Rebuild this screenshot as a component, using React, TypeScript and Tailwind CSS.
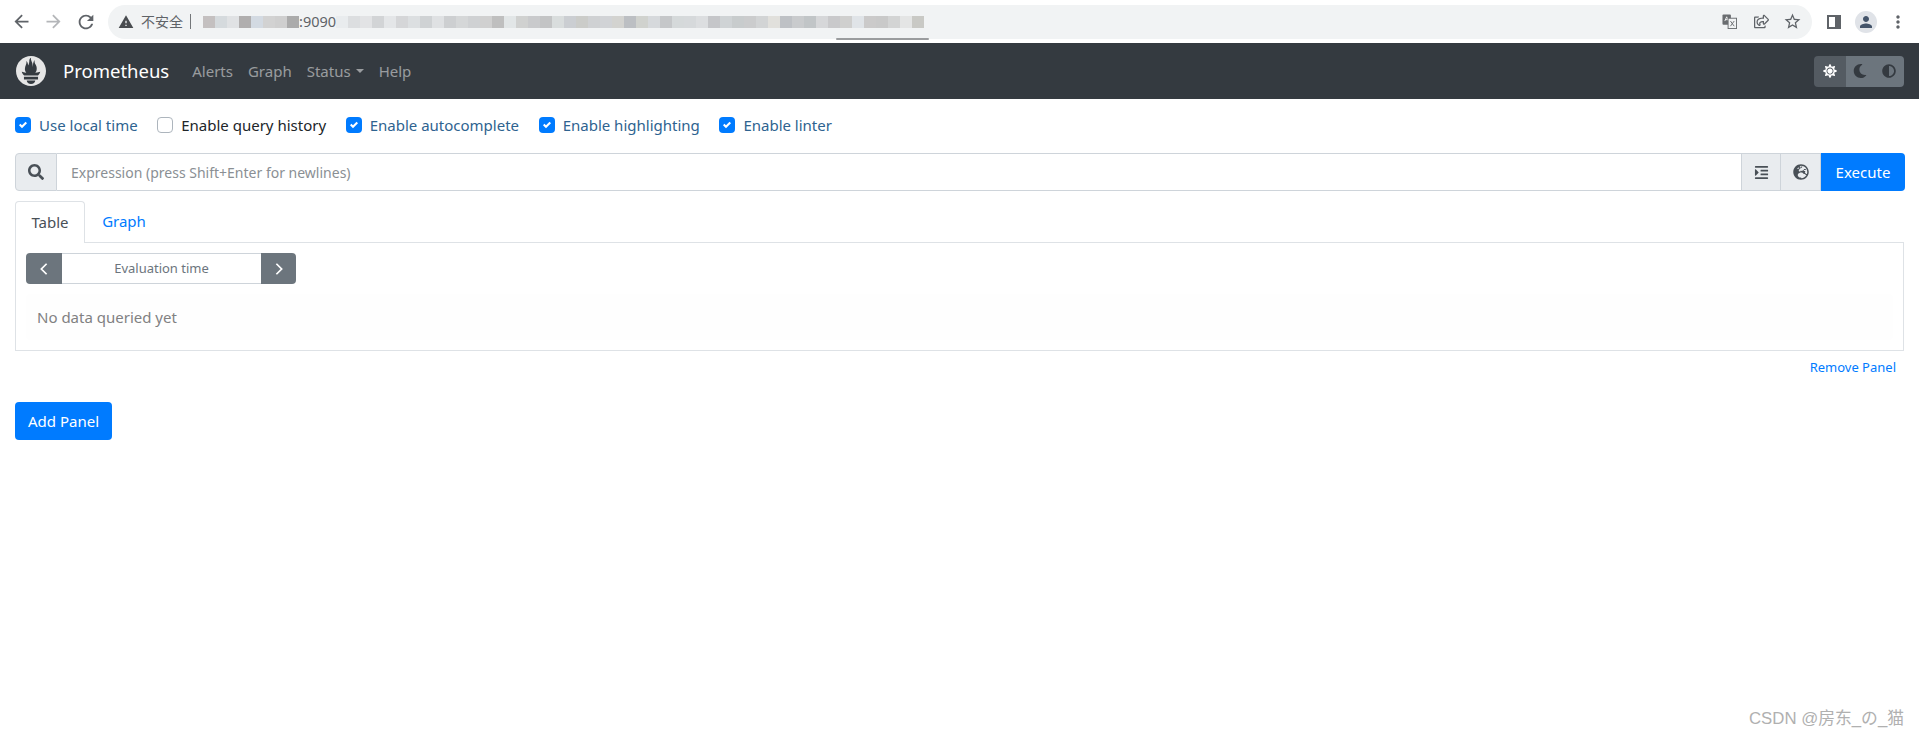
import { FaAdjust, FaGlobeEurope, FaIndent, FaMoon, FaRegShareSquare, FaSearch, FaSun } from 'react-icons/fa';
import { MdArrowBack, MdArrowForward, MdMoreVert, MdPerson, MdRefresh, MdStarBorder, MdWarning } from 'react-icons/md';
import { SiPrometheus } from 'react-icons/si';

const options = [
  { label: 'Use local time', checked: true },
  { label: 'Enable query history', checked: false },
  { label: 'Enable autocomplete', checked: true },
  { label: 'Enable highlighting', checked: true },
  { label: 'Enable linter', checked: true },
];

// blurred part of the address
const blurLeft = ['bg-[#c4c0c0]', 'bg-[#d5dadd]', 'bg-[#e0e2e4]', 'bg-[#b0aeae]', 'bg-[#d3dae2]', 'bg-[#d2d2d2]', 'bg-[#cfcfcf]', 'bg-[#ababab]'];
const blurRight = [
  'bg-[#e9ecee]', 'bg-[#dcdee0]', 'bg-[#e2e3e5]', 'bg-[#d2d4d6]', 'bg-[#e4e6e8]', 'bg-[#d5d6d8]', 'bg-[#dcdfe1]', 'bg-[#cfd2d4]', 'bg-[#dfe1e3]', 'bg-[#cdcfd1]', 'bg-[#d5d7d8]', 'bg-[#cfd1d3]',
  'bg-[#d0d0d0]', 'bg-[#bfbfbf]', 'bg-[#e2e6e7]', 'bg-[#d0d1d0]', 'bg-[#c9cacc]', 'bg-[#c3c4c5]', 'bg-[#d9dddd]', 'bg-[#cbced2]', 'bg-[#cbccc9]', 'bg-[#cfd1d3]', 'bg-[#d1d3d6]', 'bg-[#d3d3d0]',
  'bg-[#bcbfc3]', 'bg-[#d0d2ce]', 'bg-[#d6d9dc]', 'bg-[#c5c7c9]', 'bg-[#d5d9da]', 'bg-[#d6d9db]', 'bg-[#dcdee0]', 'bg-[#c5c6c9]', 'bg-[#cfd3d5]', 'bg-[#c8cccd]', 'bg-[#cbcccd]', 'bg-[#d2d4d5]',
  'bg-[#e1e0dc]', 'bg-[#bec1c5]', 'bg-[#c9cbcd]', 'bg-[#c1c5c7]', 'bg-[#d6d7d9]', 'bg-[#c9c9cb]', 'bg-[#cfcfce]', 'bg-[#e0e4e8]', 'bg-[#cbcaca]', 'bg-[#c9c9c9]', 'bg-[#d3d4d4]', 'bg-[#e4e5e5]', 'bg-[#c9c9c5]',
];

const Check = ({ checked }: { checked: boolean }) => (
  <span
    className={
      checked
        ? 'flex h-4 w-4 items-center justify-center rounded-[4px] bg-[#007bff]'
        : 'flex h-4 w-4 items-center justify-center rounded-[4px] border border-[#adb5bd] bg-white'
    }
  >
    {checked && (
      <svg viewBox="0 0 8 8" className="h-2 w-2">
        <path fill="#fff" d="M6.564.75l-3.59 3.612-1.538-1.55L0 4.26l2.974 2.99L8 2.193z" />
      </svg>
    )}
  </span>
);

const BrowserBar = () => (
  <div className="relative flex h-[43px] items-center bg-white">
    <div className="flex w-[108px] items-center pl-[11px] text-[#5f6368]">
      <MdArrowBack size={21} />
      <MdArrowForward size={21} className="ml-[11px] text-[#b4b6b9]" />
      <MdRefresh size={22} className="ml-[11px]" />
    </div>
    <div className="flex h-[34px] w-[1704px] items-center rounded-full bg-[#f1f3f4] pl-[10px]">
      <MdWarning size={16} className="text-[#494c50]" />
      <span className="ml-[7px] font-['Noto_Sans_CJK_SC',sans-serif] text-[14px] text-[#5f6368]">不安全</span>
      <span className="ml-[7px] h-[15px] w-px bg-[#74777a]" />
      <div className="ml-[12px] flex h-3">
        {blurLeft.map((c, i) => (
          <span key={i} className={`h-3 w-3 ${c}`} />
        ))}
      </div>
      <span className="text-[14.5px] leading-none text-[#5f6368]">:9090</span>
      <div className="flex h-3">
        {blurRight.map((c, i) => (
          <span key={i} className={`h-3 w-3 ${c}`} />
        ))}
      </div>
      <div className="ml-auto flex items-center pr-[10px] text-[#5f6368]">
        <svg viewBox="0 0 16 16" className="h-[15px] w-[15px]">
          <rect x="0.5" y="0.5" width="9" height="11" rx="1" fill="#6a6d70" />
          <path d="M3 7.5l2-4.5 2 4.5M3.7 6h2.6" stroke="#fff" strokeWidth="0.9" fill="none" />
          <rect x="6.5" y="4.5" width="9" height="11" fill="#f1f3f4" stroke="#6a6d70" />
          <path d="M9 7.5l4 5.5M13 7.5l-4 5.5" stroke="#6a6d70" fill="none" />
        </svg>
        <FaRegShareSquare size={15} className="ml-[17px]" />
        <MdStarBorder size={19} className="ml-[14px]" />
      </div>
    </div>
    <div className="flex flex-1 items-center text-[#5f6368]">
      <span className="ml-[15px] flex h-[14px] w-[14px] justify-end border-2 border-[#5f6368] bg-white">
        <span className="h-full w-[4px] bg-[#5f6368]" />
      </span>
      <span className="ml-[14px] flex h-[22px] w-[22px] items-center justify-center rounded-full bg-[#e0e3e8] text-[#44546a]">
        <MdPerson size={18} />
      </span>
      <MdMoreVert size={20} className="ml-[11px]" />
    </div>
    {/* leftover smudge from the blurring */}
    <span className="absolute left-[836px] top-[38px] h-[2px] w-[93px] rounded-full bg-[#9a9c9e]" />
  </div>
);

const Navbar = () => (
  <nav className="flex h-[56px] items-center bg-[#343a40] pl-4 pr-[15px]">
    <span className="flex h-[30px] w-[30px] items-center justify-center">
      <SiPrometheus size={30} className="text-[#e6e6e6]" />
    </span>
    <span className="ml-[17px] text-[18.5px] text-white">Prometheus</span>
    <div className="ml-[23px] flex items-center gap-[15px] text-[15px] text-[rgba(255,255,255,0.5)]">
      <span>Alerts</span>
      <span>Graph</span>
      <span className="flex items-center">
        Status
        <span className="ml-[5px] border-x-[4.5px] border-t-[4.5px] border-x-transparent border-t-[rgba(255,255,255,0.5)]" />
      </span>
      <span>Help</span>
    </div>
    <div className="ml-auto flex h-[31px] overflow-hidden rounded-[4px]">
      <span className="flex w-8 items-center justify-center bg-[#545b62] text-white">
        <FaSun size={14} />
      </span>
      <span className="flex w-[27px] items-center justify-center bg-[#6c757d] text-[#343a40]">
        <FaMoon size={14} />
      </span>
      <span className="flex w-[31px] items-center justify-center bg-[#6c757d] text-[#343a40]">
        <FaAdjust size={14} />
      </span>
    </div>
  </nav>
);

const QueryRow = () => (
  <div className="mt-[18px] flex h-[38px] pl-[15px] pr-[14px]">
    <span className="flex w-[42px] items-center justify-center rounded-l-[4px] border border-[#ced4da] bg-[#e9ecef] text-[#495057]">
      <FaSearch size={16} />
    </span>
    <div className="flex flex-1 items-center border-y border-[#ced4da] pl-[14px] text-[14px] text-[#8a8f94]">
      Expression (press Shift+Enter for newlines)
    </div>
    <span className="flex w-[40px] items-center justify-center border border-[#ced4da] bg-[#e9ecef] text-[#495057]">
      <FaIndent size={15} />
    </span>
    <span className="flex w-[40px] items-center justify-center border-y border-r border-[#ced4da] bg-[#e9ecef] text-[#495057]">
      <FaGlobeEurope size={16} />
    </span>
    <span className="flex w-[84px] items-center justify-center rounded-r-[4px] bg-[#007bff] text-[15px] text-white">Execute</span>
  </div>
);

const Chevron = ({ d }: { d: string }) => (
  <svg viewBox="0 0 12 16" className="h-[14px] w-[12px]" fill="none" stroke="#fff" strokeWidth="2">
    <path d={d} />
  </svg>
);

const Panel = () => (
  <div className="px-[15px]">
    <div className="mt-[10px] flex h-[41px] text-[15px]">
      <span className="z-10 -mb-px flex w-[70px] items-center justify-center rounded-t-[4px] border border-b-0 border-[#dee2e6] bg-white text-[#495057]">
        Table
      </span>
      <span className="flex w-[78px] items-center justify-center text-[#007bff]">Graph</span>
    </div>
    <div className="h-[109px] border border-[#dee2e6] px-[10px] pt-[10px]">
      <div className="flex h-[31px] w-[270px] text-[13px]">
        <span className="flex w-9 items-center justify-center rounded-l-[4px] bg-[#6c757d]">
          <Chevron d="M9 2L3 8l6 6" />
        </span>
        <span className="flex flex-1 items-center justify-center border-y border-[#ced4da] text-[#6c757d]">Evaluation time</span>
        <span className="flex w-[35px] items-center justify-center rounded-r-[4px] bg-[#6c757d]">
          <Chevron d="M3 2l6 6-6 6" />
        </span>
      </div>
      <div className="mt-[10px] flex h-[46px] items-center rounded-[4px] bg-[#fefefe] px-[11px] text-[15px] text-[#818182]">No data queried yet</div>
    </div>
    <div className="mt-[7px] flex justify-end pr-[8px] text-[13px] leading-[18px] text-[#007bff]">Remove Panel</div>
    <button className="mt-[26px] block h-[38px] w-[97px] rounded-[4px] bg-[#007bff] text-[15px] text-white">Add Panel</button>
  </div>
);

const App = () => {
  return (
    <div className="flex h-[738px] flex-col overflow-hidden bg-white font-['Noto_Sans',sans-serif] text-[#212529]">
      <BrowserBar />
      <Navbar />
      <div className="mt-[16px] flex h-[20px] items-center gap-[19.6px] pl-[15px] text-[15px]">
        {options.map((option) => (
          <label key={option.label} className="flex items-center gap-[8px]">
            <Check checked={option.checked} />
            <span className={option.checked ? 'text-[#2e6390]' : 'text-[#212529]'}>{option.label}</span>
          </label>
        ))}
      </div>
      <QueryRow />
      <Panel />
      <div className="mt-auto flex justify-end pb-[9px] pr-[15px] font-['Liberation_Sans','Noto_Sans_CJK_SC',sans-serif] text-[16.8px] leading-[20px] text-[#b0b0b0]">
        CSDN @房东_の_猫
      </div>
    </div>
  );
};

export default App;
